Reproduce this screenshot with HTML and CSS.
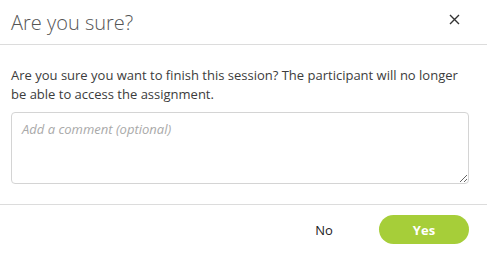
FILE: index.html
```html
<!DOCTYPE html>
<html>
<head>
<meta charset="utf-8">
<link rel="stylesheet" href="styles.css">
</head>
<body>
<div class="modal">
  <div class="modal-header">
    <h2 class="modal-title">Are you sure?</h2>
    <button class="close" aria-label="Close">
      <svg width="11" height="11" viewBox="0 0 11 11"><path d="M1 1 L10 10 M10 1 L1 10" stroke="#333" stroke-width="1.4" fill="none"/></svg>
    </button>
  </div>
  <div class="modal-body">
    <p class="message">Are you sure you want to finish this session? The participant will no longer be able to access the assignment.</p>
    <textarea class="comment" placeholder="Add a comment (optional)"></textarea>
  </div>
  <div class="modal-footer">
    <button class="btn btn-no">No</button>
    <button class="btn btn-yes">Yes</button>
  </div>
</div>
</body>
</html>
```
FILE: styles.css
```css
html, body {
  margin: 0;
  padding: 0;
  background: #fff;
}
body {
  font-family: "Open Sans", "Liberation Sans", sans-serif;
  color: #333;
}
.modal {
  width: 487px;
}
.modal-header {
  display: flex;
  align-items: center;
  justify-content: space-between;
  height: 45px;
  box-sizing: border-box;
  padding: 0 18px 0 11px;
  border-bottom: 1px solid #dcdcdc;
}
.modal-title {
  margin: 0;
  font-size: 20px;
  font-weight: 300;
  line-height: 27px;
  color: #555;
  padding-top: 1px;
}
.close {
  border: 0;
  background: none;
  padding: 0;
  width: 11px;
  height: 11px;
  margin-right: 9px;
  margin-top: -6px;
  display: flex;
}
.modal-body {
  padding: 21px 18px 20px 11px;
  border-bottom: 1px solid #dcdcdc;
}
.message {
  margin: 0 0 8px;
  font-size: 13px;
  line-height: 19px;
  color: #3c3c3c;
}
.comment {
  display: block;
  width: 100%;
  height: 72px;
  box-sizing: border-box;
  border: 1px solid #d4d4d4;
  border-radius: 4px;
  padding: 7px 10px;
  font-family: "Open Sans", "Liberation Sans", sans-serif;
  font-size: 13px;
  line-height: 18px;
  resize: vertical;
  margin: 0;
}
.comment::placeholder {
  color: #a9a9a9;
  font-style: italic;
}
.modal-footer {
  display: flex;
  justify-content: flex-end;
  gap: 10px;
  padding: 10px 18px 0 11px;
}
.btn {
  width: 90px;
  height: 29px;
  border: 0;
  border-radius: 15px;
  font-family: "Open Sans", "Liberation Sans", sans-serif;
  font-size: 13px;
  cursor: pointer;
}
.btn-no {
  background: transparent;
  color: #222;
  font-weight: 400;
}
.btn-yes {
  background: #a6ce39;
  color: #fff;
  font-weight: 700;
}
```
